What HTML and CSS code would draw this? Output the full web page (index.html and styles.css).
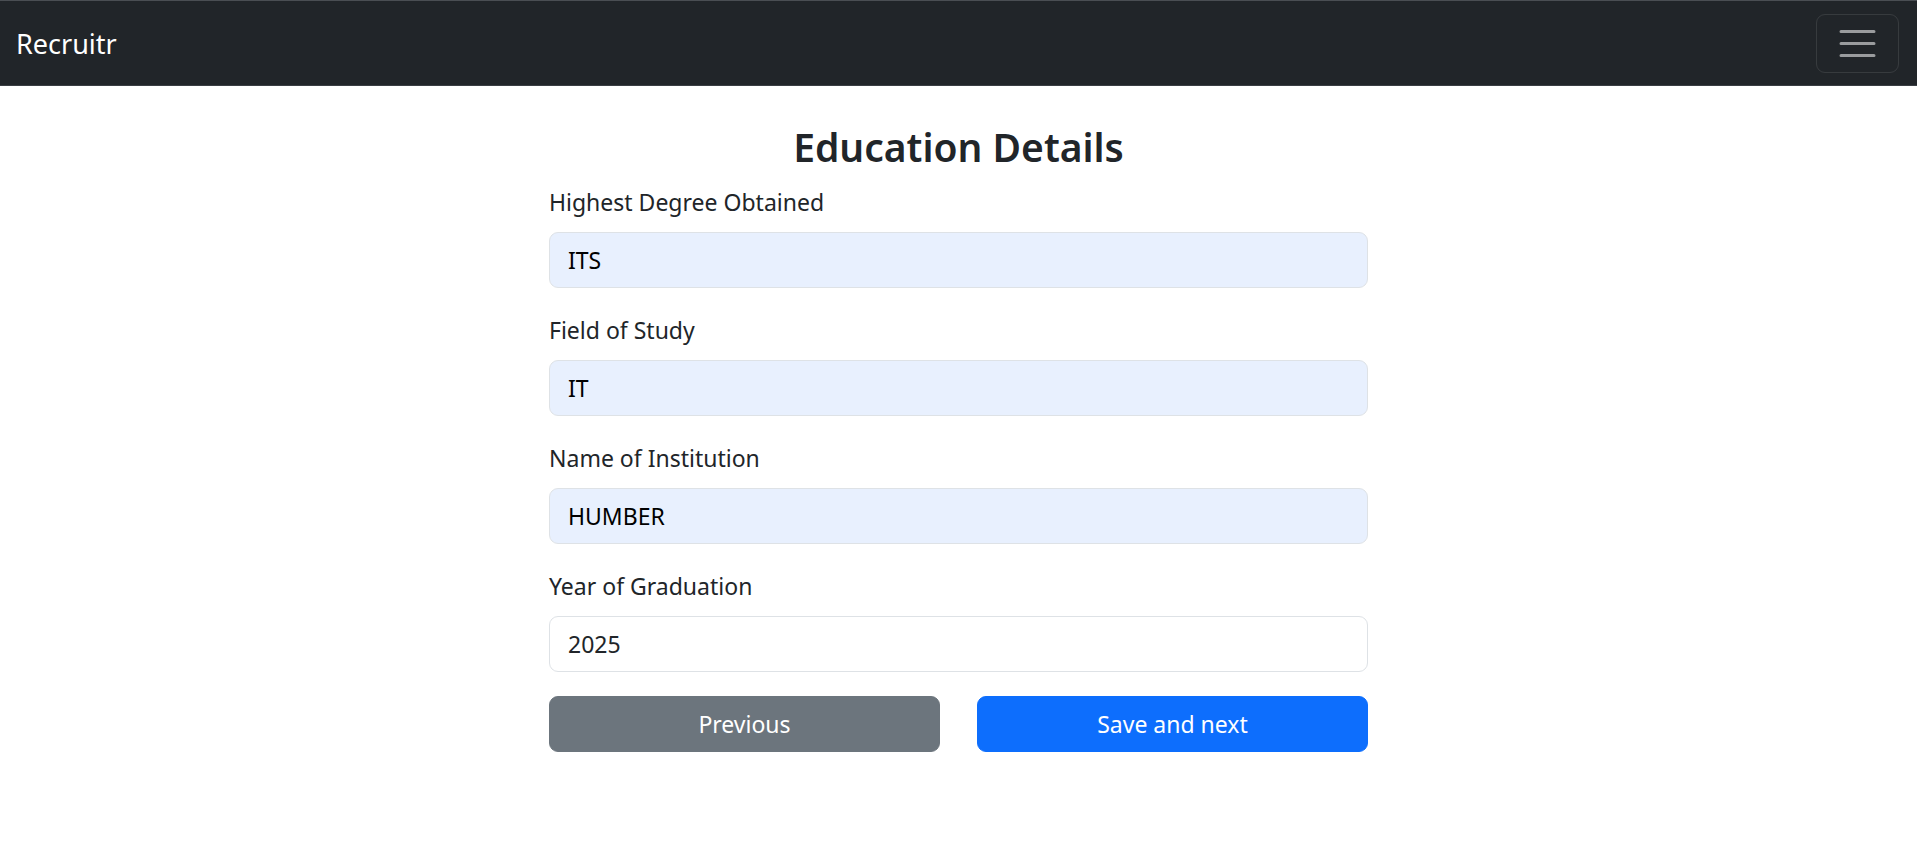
FILE: index.html
```html
<!DOCTYPE html>
<html lang="en">
<head>
<meta charset="utf-8">
<title>Recruitr - Education Details</title>
<link rel="stylesheet" href="styles.css">
</head>
<body>
<nav class="navbar">
  <a class="brand" href="#">Recruitr</a>
  <button class="toggler" type="button" aria-label="Toggle navigation">
    <svg class="toggler-icon" width="45" height="45" viewBox="0 0 30 30" aria-hidden="true">
      <path d="M4 7h22M4 15h22M4 23h22" stroke="rgba(255,255,255,0.55)" stroke-width="2" stroke-linecap="round" fill="none"/>
    </svg>
  </button>
</nav>
<main class="page">
  <div class="form-col">
    <h3 class="title">Education Details</h3>
    <form class="form">
      <div class="group">
        <label class="label" for="degree">Highest Degree Obtained</label>
        <input class="control autofill" id="degree" type="text" value="ITS">
      </div>
      <div class="group">
        <label class="label" for="field">Field of Study</label>
        <input class="control autofill" id="field" type="text" value="IT">
      </div>
      <div class="group">
        <label class="label" for="inst">Name of Institution</label>
        <input class="control autofill" id="inst" type="text" value="HUMBER">
      </div>
      <div class="group">
        <label class="label" for="year">Year of Graduation</label>
        <input class="control" id="year" type="text" value="2025">
      </div>
      <div class="actions">
        <button class="btn btn-secondary" type="button">Previous</button>
        <button class="btn btn-primary" type="submit">Save and next</button>
      </div>
    </form>
  </div>
</main>
</body>
</html>
```

FILE: styles.css
```css
* { box-sizing: border-box; }

body {
  margin: 0;
  font-family: "Noto Sans", "Open Sans", sans-serif;
  color: #212529;
  background: #fff;
}

.navbar {
  display: flex;
  align-items: center;
  justify-content: space-between;
  height: 86px;
  padding: 0 18px 0 16px;
  background: #212529;
  border-top: 1px solid #4a4e53;
  border-bottom: 1px solid #3a3e43;
}

.brand {
  color: #fff;
  text-decoration: none;
  font-size: 27px;
  line-height: 1;
}

.toggler {
  display: flex;
  align-items: center;
  justify-content: center;
  width: 83px;
  height: 59px;
  padding: 0;
  background: transparent;
  border: 1px solid rgba(255, 255, 255, 0.1);
  border-radius: 9px;
}

.toggler-icon { display: block; }

.page {
  display: flex;
  justify-content: center;
}

.form-col {
  width: 819px;
  padding-top: 36px;
}

.title {
  margin: 0 0 12px;
  text-align: center;
  font-size: 39px;
  font-weight: 560;
  line-height: 50px;
  color: #212529;
}

.form {
  display: flex;
  flex-direction: column;
}

.group {
  display: flex;
  flex-direction: column;
  margin-bottom: 24px;
}

.label {
  font-size: 23px;
  line-height: 36px;
  margin-bottom: 12px;
  color: #212529;
}

.control {
  height: 56px;
  padding: 0 18px;
  font-family: inherit;
  font-size: 23px;
  color: #212529;
  background: #fff;
  border: 1px solid #dee2e6;
  border-radius: 9px;
  outline: none;
}

.control.autofill {
  background: #e8f0fe;
  color: #000;
}

.actions {
  display: flex;
  gap: 37px;
}

.btn {
  flex: 1;
  height: 56px;
  font-family: inherit;
  font-size: 23px;
  color: #fff;
  border: 1px solid transparent;
  border-radius: 9px;
}

.btn-secondary { background: #6c757d; border-color: #6c757d; }
.btn-primary { background: #0d6efd; border-color: #0d6efd; }
```
